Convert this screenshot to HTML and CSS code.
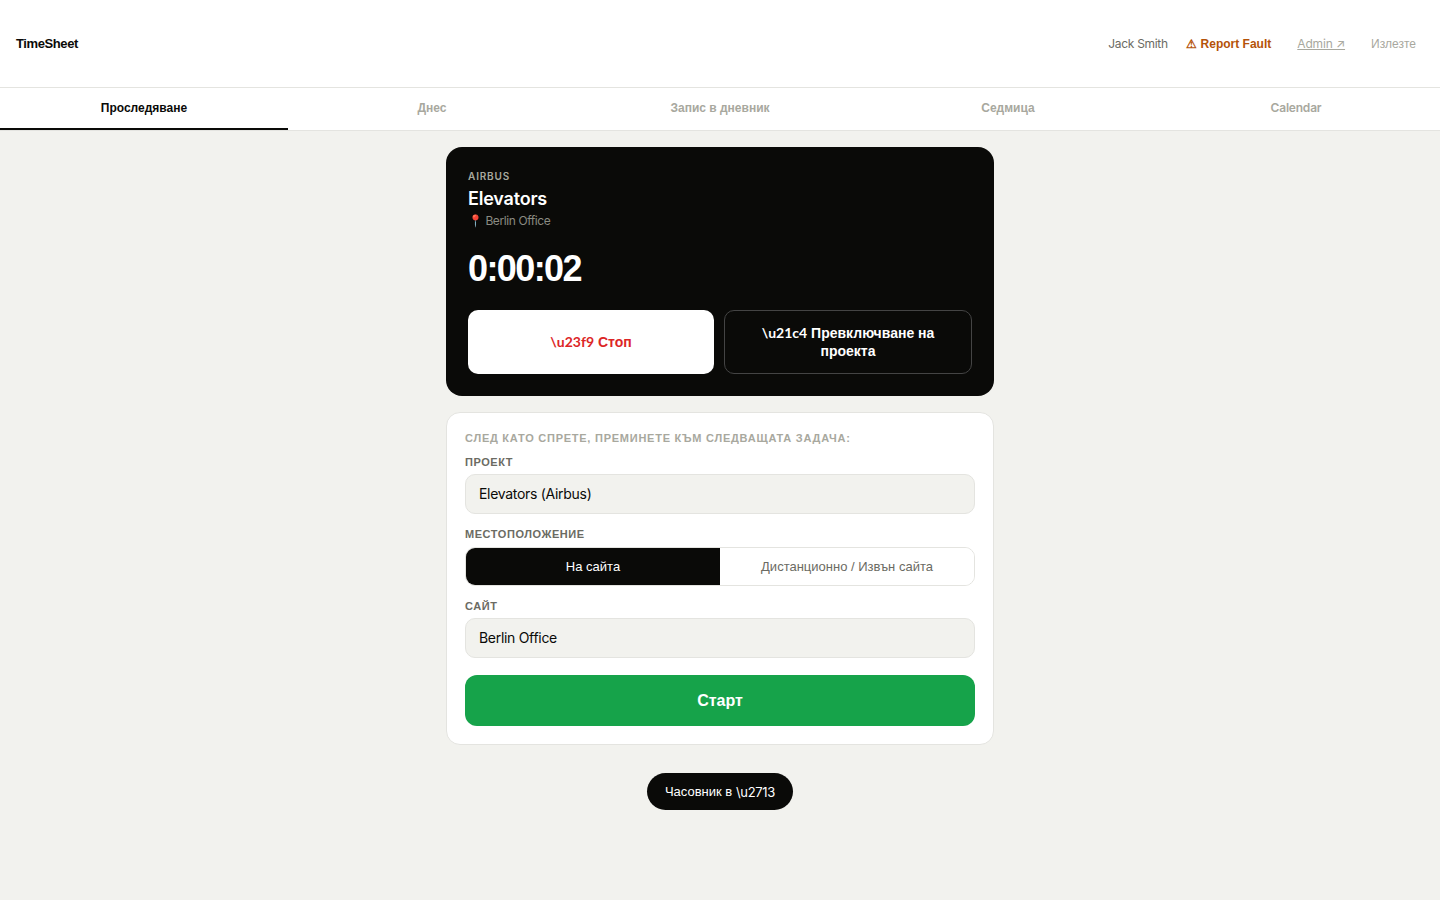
FILE: index.html
```html
<!DOCTYPE html>
<html lang="bg">
<head>
<meta charset="utf-8">
<title>TimeSheet</title>
<link rel="stylesheet" href="styles.css">
</head>
<body>
<header class="topbar">
  <div class="brand">TimeSheet</div>
  <nav class="topnav">
    <span class="user">Jack Smith</span>
    <a class="fault">⚠ Report Fault</a>
    <a class="admin">Admin ↗</a>
    <a class="logout">Излезте</a>
  </nav>
</header>
<nav class="tabs">
  <a class="tab active">Проследяване</a>
  <a class="tab">Днес</a>
  <a class="tab">Запис в дневник</a>
  <a class="tab">Седмица</a>
  <a class="tab"><span class="tab-latin">Calendar</span></a>
</nav>
<main class="main">
  <section class="timer-card">
    <div class="client">AIRBUS</div>
    <div class="project">Elevators</div>
    <div class="place"><span class="pin">📍</span> <span class="place-name">Berlin Office</span></div>
    <div class="clock">0:00:02</div>
    <div class="actions">
      <button class="btn stop"><span class="code">\u23f9</span> Стоп</button>
      <button class="btn switch"><span class="code">\u21c4</span> Превключване на проекта</button>
    </div>
  </section>
  <section class="next-card">
    <div class="next-title">След като спрете, преминете към следващата задача:</div>
    <label class="field-label first">Проект</label>
    <div class="select">Elevators (Airbus)</div>
    <label class="field-label">Местоположение</label>
    <div class="segment">
      <div class="seg on">На сайта</div>
      <div class="seg">Дистанционно / Извън сайта</div>
    </div>
    <label class="field-label">Сайт</label>
    <div class="select">Berlin Office</div>
    <button class="start">Старт</button>
  </section>
  <div class="toast">Часовник в <span class="tick">\u2713</span></div>
</main>
</body>
</html>
```

FILE: styles.css
```css
* { box-sizing: border-box; }
html, body { margin: 0; height: 100%; }
body {
  background: #f2f2ee;
  color: #0a0a08;
  font-family: "Inter", "Liberation Sans", sans-serif;
}
.code { font-family: "Lato", sans-serif; }
.tick { font-family: "Inter", sans-serif; letter-spacing: -.3px; }
.topbar {
  height: 88px;
  background: #fff;
  border-bottom: 1px solid #e4e4e0;
  display: flex;
  align-items: center;
  justify-content: space-between;
  padding: 0 24px 0 16px;
}
.brand { font: 700 13px "Liberation Sans", sans-serif; letter-spacing: -.4px; color: #0a0a08; }
.topnav { display: flex; align-items: center; gap: 18px; font-size: 12px; }
.user { color: #6b6b63; letter-spacing: -.3px; margin-right: .5px; }
.fault { font: 700 12px "Liberation Sans", sans-serif; color: #b45309; margin-right: 8px; }
.admin { color: #a8a89e; text-decoration: underline; margin-right: 8px; letter-spacing: -.15px; }
.logout { color: #a8a89e; font-family: "Liberation Sans", sans-serif; }
.tabs {
  display: flex;
  height: 43px;
  background: #fff;
  border-bottom: 1px solid #e4e4e0;
}
.tab {
  flex: 1;
  height: 42px;
  display: flex;
  align-items: center;
  justify-content: center;
  font: 700 12px "Liberation Sans", sans-serif;
  color: #a8a89e;
  border-bottom: 2px solid transparent;
}
.tab-latin { font-family: "Inter", sans-serif; font-weight: 600; letter-spacing: -.2px; margin-bottom: 2px; }
.tab.active { color: #0a0a08; border-bottom-color: #0a0a08; }
.main {
  width: 548px;
  margin: 0 auto;
  padding-top: 16px;
  display: flex;
  flex-direction: column;
  align-items: stretch;
}
.timer-card {
  background: #0a0a08;
  border-radius: 16px;
  padding: 22px;
  color: #fff;
}
.client { font-size: 10px; font-weight: 600; letter-spacing: .85px; color: #a8a89e; height: 14px; line-height: 14px; }
.project { font-size: 18px; font-weight: 600; letter-spacing: -.2px; height: 24px; line-height: 24px; margin-top: 4px; }
.place { font-size: 12px; color: #8a8a82; height: 16px; line-height: 16px; margin-top: 2px; }
.place-name { letter-spacing: -.4px; margin-left: -1px; }
.pin { font-size: 12px; }
.clock { font: 700 36px/44px "Liberation Sans", sans-serif; letter-spacing: -1.6px; margin-top: 18px; }
.actions { display: flex; gap: 10px; margin-top: 19px; }
.btn {
  flex: 1;
  height: 64px;
  padding: 0 24px;
  border-radius: 10px;
  font: 700 14px/18px "Liberation Sans", sans-serif;
  cursor: pointer;
}
.stop { background: #fff; color: #dc2626; border: 0; }
.switch { background: transparent; color: #fff; border: 1px solid #444; }
.next-card {
  margin-top: 16px;
  background: #fff;
  border: 1px solid #e4e4e0;
  border-radius: 14px;
  padding: 18px;
}
.next-title {
  font: 700 11px/14px "Liberation Sans", sans-serif;
  letter-spacing: .75px;
  text-transform: uppercase;
  color: #a8a89e;
}
.field-label {
  display: block;
  font: 700 11px/14px "Liberation Sans", sans-serif;
  letter-spacing: .55px;
  text-transform: uppercase;
  color: #6b6b63;
  margin: 13px 0 5px;
}
.field-label.first { margin-top: 10px; }
.select {
  height: 40px;
  background: #f2f2ee;
  border: 1px solid #e4e4e0;
  border-radius: 10px;
  padding: 0 13px 2px;
  display: flex;
  align-items: center;
  font-size: 14px;
  letter-spacing: -.3px;
}
.segment {
  display: flex;
  height: 39px;
  margin-top: 6px;
  border: 1px solid #e4e4e0;
  border-radius: 10px;
  overflow: hidden;
}
.seg {
  flex: 1;
  display: flex;
  align-items: center;
  justify-content: center;
  font: 400 13px "Liberation Sans", sans-serif;
  color: #6b6b63;
  background: #fff;
}
.seg.on { background: #0a0a08; color: #fff; }
.start {
  display: block;
  width: 100%;
  height: 51px;
  margin-top: 17px;
  background: #16a34a;
  color: #fff;
  border: 0;
  border-radius: 12px;
  font: 700 16px "Liberation Sans", sans-serif;
}
.toast {
  align-self: center;
  margin-top: 28px;
  height: 37px;
  padding: 0 18px;
  border-radius: 19px;
  background: #0a0a08;
  color: #fff;
  display: flex;
  align-items: center;
  white-space: pre;
  font: 400 13px "Liberation Sans", sans-serif;
}
```
